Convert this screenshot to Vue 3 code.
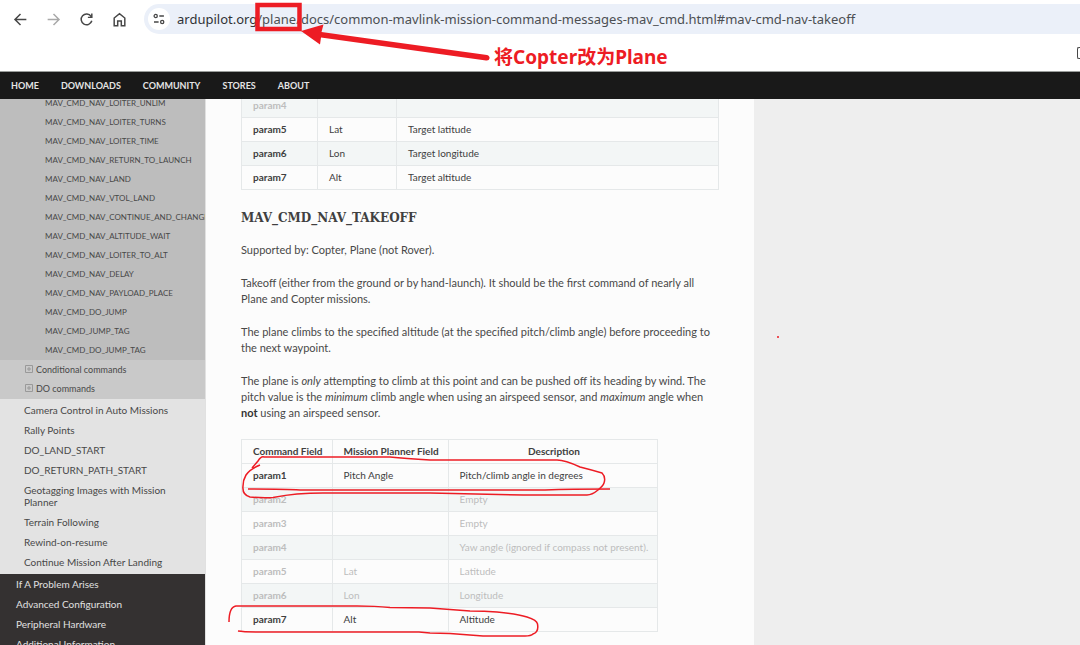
<script setup>
const host = 'ardupilot.org'
const path = '/plane/docs/common-mavlink-mission-command-messages-mav_cmd.html#mav-cmd-nav-takeoff'

const navLinks = ['Home', 'Downloads', 'Community', 'Stores', 'About']

const navCommands = [
  'MAV_CMD_NAV_LOITER_UNLIM',
  'MAV_CMD_NAV_LOITER_TURNS',
  'MAV_CMD_NAV_LOITER_TIME',
  'MAV_CMD_NAV_RETURN_TO_LAUNCH',
  'MAV_CMD_NAV_LAND',
  'MAV_CMD_NAV_VTOL_LAND',
  'MAV_CMD_NAV_CONTINUE_AND_CHANGE_ALT',
  'MAV_CMD_NAV_ALTITUDE_WAIT',
  'MAV_CMD_NAV_LOITER_TO_ALT',
  'MAV_CMD_NAV_DELAY',
  'MAV_CMD_NAV_PAYLOAD_PLACE',
  'MAV_CMD_DO_JUMP',
  'MAV_CMD_JUMP_TAG',
  'MAV_CMD_DO_JUMP_TAG'
]
const groups = ['Conditional commands', 'DO commands']
const topics = [
  'Camera Control in Auto Missions',
  'Rally Points',
  'DO_LAND_START',
  'DO_RETURN_PATH_START',
  'Geotagging Images with Mission Planner',
  'Terrain Following',
  'Rewind-on-resume',
  'Continue Mission After Landing'
]
const sections = ['If A Problem Arises', 'Advanced Configuration', 'Peripheral Hardware', 'Additional Information']

const waypointRows = [
  { name: 'param4', field: '', text: '', unused: true },
  { name: 'param5', field: 'Lat', text: 'Target latitude' },
  { name: 'param6', field: 'Lon', text: 'Target longitude' },
  { name: 'param7', field: 'Alt', text: 'Target altitude' }
]
const takeoffRows = [
  { name: 'param1', field: 'Pitch Angle', text: 'Pitch/climb angle in degrees' },
  { name: 'param2', field: '', text: 'Empty', unused: true },
  { name: 'param3', field: '', text: 'Empty', unused: true },
  { name: 'param4', field: '', text: 'Yaw angle (ignored if compass not present).', unused: true },
  { name: 'param5', field: 'Lat', text: 'Latitude', unused: true },
  { name: 'param6', field: 'Lon', text: 'Longitude', unused: true },
  { name: 'param7', field: 'Alt', text: 'Altitude' }
]
</script>

<template>
  <div class="page">
    <header class="browser">
      <div class="toolbar">
        <button class="tool" aria-label="Back">
          <svg viewBox="0 0 16 16"><path d="M13.5 8H3M8 2.8 2.8 8 8 13.2" /></svg>
        </button>
        <button class="tool off" aria-label="Forward">
          <svg viewBox="0 0 16 16"><path d="M2.5 8H13M8 2.8 13.2 8 8 13.2" /></svg>
        </button>
        <button class="tool" aria-label="Reload">
          <svg viewBox="0 0 16 16"><path d="M12.3 5A5.1 5.1 0 1 0 13 9.2M13 2.4V6H9.3" /></svg>
        </button>
        <button class="tool" aria-label="Home page">
          <svg viewBox="0 0 16 16"><path d="M3 6.6 8 2.6l5 4v7.2H9.7V9.3H6.3v4.5H3z" /></svg>
        </button>
        <div class="address">
          <button class="site" aria-label="Site information">
            <svg viewBox="0 0 14 14"><circle cx="3.7" cy="4" r="1.6" /><path d="M7.3 4h4.6M2 10h4.6" /><circle cx="10.2" cy="10" r="1.6" /></svg>
          </button>
          <label class="host" for="url">{{ host }}</label>
          <input id="url" class="path" type="text" :value="path" spellcheck="false" />
        </div>
      </div>
      <div class="bookmarks">
        <button class="folder" aria-label="All bookmarks"></button>
      </div>
    </header>

    <nav class="site-nav">
      <a v-for="link in navLinks" :key="link" href="#">{{ link }}</a>
    </nav>

    <div class="body">
      <aside class="sidebar">
        <ul class="commands">
          <li v-for="item in navCommands" :key="item"><a href="#">{{ item }}</a></li>
        </ul>
        <ul class="groups">
          <li v-for="item in groups" :key="item">
            <a href="#">
              <svg viewBox="0 0 8 8"><path d="M.5.5h7v7h-7zM4 2v4M2 4h4" /></svg>{{ item }}
            </a>
          </li>
        </ul>
        <ul class="topics">
          <li v-for="item in topics" :key="item"><a href="#">{{ item }}</a></li>
        </ul>
        <ul class="sections">
          <li v-for="item in sections" :key="item"><a href="#">{{ item }}</a></li>
        </ul>
      </aside>

      <main class="content">
        <table class="wide">
          <colgroup><col class="c-name" /><col class="c-field" /><col /></colgroup>
          <tbody>
            <tr v-for="row in waypointRows" :key="row.name" :class="{ unused: row.unused }">
              <td class="name">{{ row.name }}</td>
              <td>{{ row.field }}</td>
              <td>{{ row.text }}</td>
            </tr>
          </tbody>
        </table>

        <h3>MAV_CMD_NAV_TAKEOFF</h3>
        <p>Supported by: Copter, Plane (not Rover).</p>
        <p>Takeoff (either from the ground or by hand-launch). It should be the first command of nearly all Plane and Copter missions.</p>
        <p>The plane climbs to the specified altitude (at the specified pitch/climb angle) before proceeding to the next waypoint.</p>
        <p>The plane is <em>only</em> attempting to climb at this point and can be pushed off its heading by wind. The pitch value is the <em>minimum</em> climb angle when using an airspeed sensor, and <em>maximum</em> angle when <strong>not</strong> using an airspeed sensor.</p>

        <table class="params">
          <thead>
            <tr><th>Command Field</th><th>Mission Planner Field</th><th>Description</th></tr>
          </thead>
          <tbody>
            <tr v-for="row in takeoffRows" :key="row.name" :class="{ unused: row.unused }">
              <td class="name">{{ row.name }}</td>
              <td>{{ row.field }}</td>
              <td>{{ row.text }}</td>
            </tr>
          </tbody>
        </table>
      </main>
    </div>

    <svg class="marks" aria-hidden="true">
      <rect x="257.500" y="5" width="42" height="24" stroke-width="4.500" />
      <path class="solid" d="M301 31 323.500 24.500 321.500 32 487 55Q490 56 489.500 58.500 489 61 486 60.500L321 37.500 320 44.500z" />
      <path d="M260 465Q250 469 246 475 243 480 243 486 242 495 250 497 261 498 273 497.500 286 495 297 494 310 493 323 493H430Q480 494 523 495H587Q592 495 598 490 603 486 604 483 606 477 602 473 592 470 580 467 565 460 557 460H430Q405 458.500 390 457H264Q261 456 258 461L252 468" />
      <path d="M248 489Q285 489 300 490H545Q570 489 610 489" />
      <path d="M229 622Q229 607 236 606H357Q375 606 390 607.500L430 608 470 611Q485 611 497 612 517 614 527 617 537 620 537.500 624 539 632 533 634 531 636 525 636H483L450 633.500 430 633 419 632H262Q244 632 238 631" />
      <path d="M777 337h2" />
    </svg>
    <div class="note">将Copter改为Plane</div>
  </div>
</template>

<style>
body {
  margin: 0;
  overflow: hidden;
}
</style>

<style scoped>
.page {
  position: relative;
  display: flex;
  flex-direction: column;
  height: 100vh;
  overflow: hidden;
  background: #fff;
  color: #484848;
  font-family: Lato, "Liberation Sans", sans-serif;
  font-size: 11px;
}
a { color: inherit; text-decoration: none; }
ul { margin: 0; padding: 0; list-style: none; }
button { padding: 0; border: 0; background: none; }

.browser {
  flex: none;
  border-bottom: 1px solid #9a9d9b;
}
.toolbar {
  display: flex;
  align-items: center;
  padding: 4px 0 0 12px;
}
.tool {
  display: flex;
  width: 17px;
  height: 17px;
  margin-right: 16px;
}
.tool svg {
  width: 17px;
  height: 17px;
  fill: none;
  stroke: #474747;
  stroke-width: 1.4;
}
.tool.off svg { stroke: #a9a9a9; }
.address {
  display: flex;
  flex: 1;
  align-items: center;
  height: 30px;
  padding-left: 4px;
  border-radius: 15px 0 0 15px;
  background: #ebf0f9;
  color: #4c4f53;
  font: 13px "Noto Sans", "Open Sans", sans-serif;
}
.site {
  display: flex;
  align-items: center;
  justify-content: center;
  width: 22px;
  height: 22px;
  margin-right: 7px;
  border-radius: 50%;
  background: #fff;
}
.site svg {
  width: 14px;
  height: 14px;
  fill: none;
  stroke: #474747;
  stroke-width: 1.3;
}
.host { color: #303236; }
.path {
  flex: 1;
  min-width: 0;
  padding: 0;
  border: 0;
  outline: 0;
  background: none;
  color: inherit;
  font: inherit;
}
.bookmarks {
  display: flex;
  justify-content: flex-end;
  padding: 13px 0 12px;
}
.folder {
  width: 3px;
  height: 12px;
  border: 1px solid #474747;
  border-right: 0;
  border-radius: 2px 0 0 2px;
}

.site-nav {
  display: flex;
  flex: none;
  gap: 22px;
  padding: 0 11px;
  background: #191919;
  color: #e4e4e4;
  font-size: 9px;
  font-weight: 700;
  line-height: 27px;
  text-transform: uppercase;
}

.body {
  display: flex;
  flex: 1;
  min-height: 0;
  overflow: hidden;
  background: #eee;
}
.sidebar {
  flex: none;
  width: 205px;
  height: 100%;
  overflow: hidden;
  border-right: 1px solid #e1e1e1;
  background: #343131;
}
.sidebar a { display: block; }
.commands {
  margin-top: -5px;
  background: #bdbdbd;
  font-size: 8px;
  line-height: 19px;
  white-space: nowrap;
}
.commands a { padding-left: 45px; }
.groups {
  padding-bottom: 1px;
  background: #c9c9c9;
  font-size: 9px;
  line-height: 19px;
}
.groups a { padding-left: 25px; }
.groups svg {
  width: 8px;
  height: 8px;
  margin-right: 3px;
  fill: none;
  stroke: #999;
}
.topics {
  padding: 1px 0 2px;
  background: #e3e3e3;
  font-size: 10px;
  line-height: 12px;
}
.topics a { padding: 4px 24px; }
.sections {
  color: #e0e0e0;
  font-size: 10px;
  line-height: 20px;
}
.sections a { padding-left: 16px; }

.content {
  flex: 0 1 548px;
  box-sizing: border-box;
  padding: 0 35px;
  background: #fcfcfc;
}
table {
  border-collapse: collapse;
  color: #404040;
}
.wide {
  width: 100%;
  margin-top: -6px;
  table-layout: fixed;
}
.c-name { width: 76px; }
.c-field { width: 79px; }
th, td {
  height: 21px;
  padding: 0 9px 2px 11px;
  border: 1px solid #e5e8e9;
  font-size: 10px;
  text-align: left;
  white-space: nowrap;
}
th { text-align: center; }
.name { font-weight: 700; }
.wide tr:nth-child(odd) td,
.params tbody tr:nth-child(even) td { background: #f3f6f6; }
.unused td { color: #bdbdbd; }
h3 {
  margin: 19px 0 15px;
  color: #404040;
  font: 700 12px/18px "Roboto Slab", "DejaVu Serif", serif;
}
p {
  margin: 0 0 17px;
  line-height: 16px;
}
strong { color: #333; }
.params { margin-top: 18px; }

.marks {
  position: absolute;
  inset: 0;
  width: 100%;
  height: 100%;
  fill: none;
  stroke: #ed1c24;
  stroke-width: 1.5;
  pointer-events: none;
}
.marks .solid {
  fill: #ed1c24;
  stroke: none;
}
.note {
  position: absolute;
  top: 44px;
  left: 494px;
  color: #ed1c24;
  font: 700 19px/26px "Noto Sans", "Noto Sans CJK SC", sans-serif;
  white-space: nowrap;
}
</style>
